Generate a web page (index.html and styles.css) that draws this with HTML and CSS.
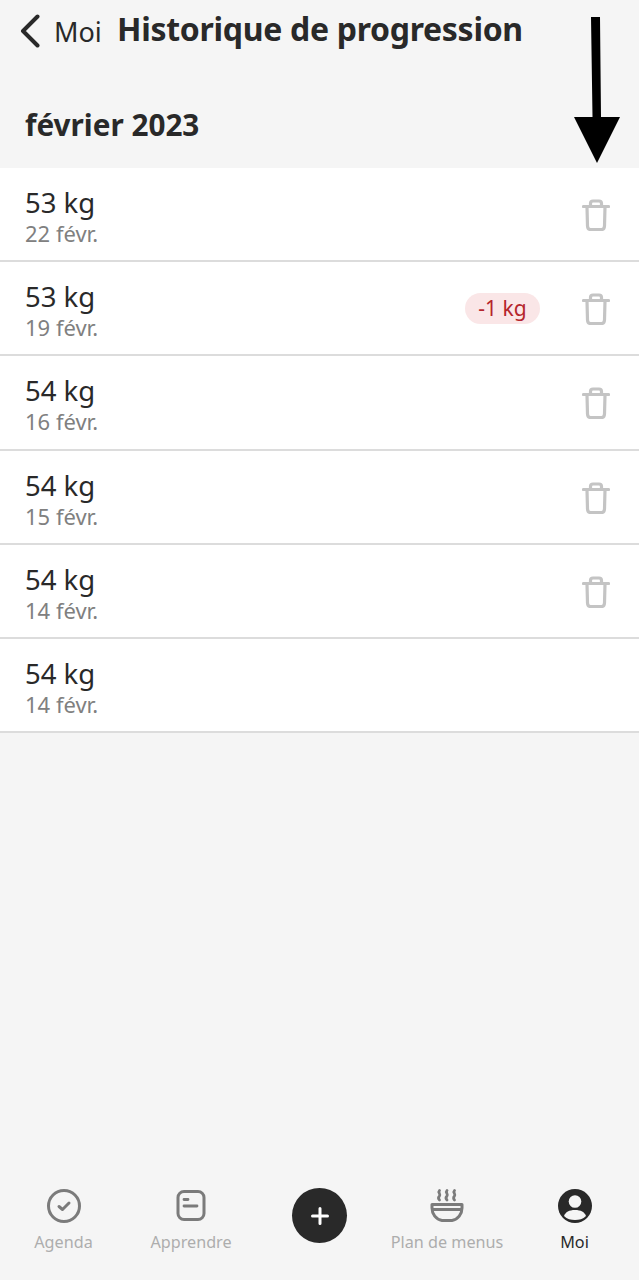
FILE: index.html
```html
<!DOCTYPE html>
<html lang="fr">
<head>
<meta charset="utf-8">
<title>Historique de progression</title>
<link rel="stylesheet" href="styles.css">
</head>
<body>
<svg class="defs" width="0" height="0" aria-hidden="true">
  <symbol id="trash" viewBox="0 0 28 32">
    <path d="M1.500 7.500H26.500M8.500 7V4.500C8.500 2.800 9.500 2 11 2H17C18.500 2 19.500 2.800 19.500 4.500V7M5 8L5.500 27C5.600 29 6.800 30.500 8.500 30.500H19.500C21.200 30.500 22.400 29 22.500 27L23 8" fill="none" stroke="currentColor" stroke-width="3.200" stroke-linecap="round" stroke-linejoin="round"/>
  </symbol>
</svg>
<div class="app">
  <header class="topbar">
    <svg class="back" viewBox="0 0 22 34" aria-hidden="true"><path d="M17.500 2.500L3 17L17.500 31.500" fill="none" stroke="currentColor" stroke-width="4" stroke-linecap="round" stroke-linejoin="round"/></svg>
    <span class="back-label">Moi</span>
    <h1 class="title">Historique de progression</h1>
  </header>
  <svg class="arrow" viewBox="0 0 46 146" aria-hidden="true"><path d="M17 0H26L27 100H46L23 146L0 100H18.500Z" fill="#000"/></svg>
  <h2 class="month">février 2023</h2>
  <ul class="list">
    <li class="row">
      <div class="info"><div class="weight">53 kg</div><div class="date">22 févr.</div></div>
      <svg class="trash"><use href="#trash"/></svg>
    </li>
    <li class="row">
      <div class="info"><div class="weight">53 kg</div><div class="date">19 févr.</div></div>
      <span class="badge">-1 kg</span>
      <svg class="trash"><use href="#trash"/></svg>
    </li>
    <li class="row">
      <div class="info"><div class="weight">54 kg</div><div class="date">16 févr.</div></div>
      <svg class="trash"><use href="#trash"/></svg>
    </li>
    <li class="row">
      <div class="info"><div class="weight">54 kg</div><div class="date">15 févr.</div></div>
      <svg class="trash"><use href="#trash"/></svg>
    </li>
    <li class="row">
      <div class="info"><div class="weight">54 kg</div><div class="date">14 févr.</div></div>
      <svg class="trash"><use href="#trash"/></svg>
    </li>
    <li class="row">
      <div class="info"><div class="weight">54 kg</div><div class="date">14 févr.</div></div>
    </li>
  </ul>
  <nav class="tabbar">
    <div class="tab tab-agenda">
      <svg class="tab-icon" viewBox="0 0 36 36" aria-hidden="true"><circle cx="18" cy="18" r="15.500" fill="none" stroke="currentColor" stroke-width="3"/><path d="M13 18.500L16.500 21.500L23 15" fill="none" stroke="currentColor" stroke-width="3" stroke-linecap="round" stroke-linejoin="round"/></svg>
      <span class="tab-label">Agenda</span>
    </div>
    <div class="tab tab-learn">
      <svg class="tab-icon" viewBox="0 0 36 36" aria-hidden="true"><rect x="5" y="3.500" width="26" height="28" rx="6" fill="none" stroke="currentColor" stroke-width="3"/><path d="M11 11.500H15M11 18H24" fill="none" stroke="currentColor" stroke-width="2.800" stroke-linecap="round"/></svg>
      <span class="tab-label">Apprendre</span>
    </div>
    <div class="tab tab-add">
      <div class="add-button"><svg class="plus" viewBox="0 0 18 18" aria-hidden="true"><path d="M9 1.500V16.500M1.500 9H16.500" fill="none" stroke="#fff" stroke-width="3" stroke-linecap="round"/></svg></div>
    </div>
    <div class="tab tab-menu">
      <svg class="tab-icon" viewBox="0 0 36 36" aria-hidden="true"><path d="M3 16.500H33V20C33 26 29 31.500 23 32.500H13C7 31.500 3 26 3 20Z" fill="none" stroke="currentColor" stroke-width="3" stroke-linejoin="round"/><path d="M3 21.500H33" stroke="currentColor" stroke-width="3"/><path d="M10.500 2.500C8.500 4.500 12 6 10.500 8C9 9.500 9.500 11 10.500 12M18 2.500C16 4.500 19.500 6 18 8C16.500 9.500 17 11 18 12M25.500 2.500C23.500 4.500 27 6 25.500 8C24 9.500 24.500 11 25.500 12" fill="none" stroke="currentColor" stroke-width="2.800" stroke-linecap="round"/></svg>
      <span class="tab-label">Plan de menus</span>
    </div>
    <div class="tab tab-me">
      <svg class="tab-icon" viewBox="0 0 36 36" aria-hidden="true"><circle cx="18" cy="18" r="17" fill="#292929"/><circle cx="18" cy="13.500" r="6.300" fill="#f5f5f5"/><path d="M7 28C8.500 24 12 22 18 22C24 22 27.500 24 29 28C26 31 22 32 18 32C14 32 10 31 7 28Z" fill="#f5f5f5"/></svg>
      <span class="tab-label tab-label-active">Moi</span>
    </div>
  </nav>
</div>
</body>
</html>
```

FILE: styles.css
```css
* { box-sizing: border-box; }
html, body { margin: 0; padding: 0; }
body {
  background: #f5f5f5;
  color: #292929;
  font-family: "Noto Sans", "Liberation Sans", sans-serif;
}
.defs { position: absolute; }
.app {
  position: relative;
  width: 639px;
  height: 1280px;
  display: flex;
  flex-direction: column;
  overflow: hidden;
}
.topbar {
  display: flex;
  align-items: center;
  height: 62px;
  padding-left: 20px;
}
.back { width: 22px; height: 34px; color: #292929; }
.back-label { margin-left: 12px; font-size: 27px; width: 63px; }
.title { margin: 0 0 5px; font-size: 32px; font-weight: 700; letter-spacing: -.3px; white-space: nowrap; }
.arrow { position: absolute; left: 574px; top: 17px; width: 46px; height: 146px; }
.month { margin: 0; padding: 40px 0 0 25px; height: 106px; font-size: 29.700px; line-height: 46px; font-weight: 700; }
.list { margin: 0; padding: 0; list-style: none; background: #fff; }
.row {
  display: flex;
  align-items: center;
  height: 94.200px;
  padding: 0 29px 0 25px;
  border-bottom: 2px solid #dcdcdc;
}
.info { flex: 1; padding-top: 5px; }
.weight { font-size: 27.500px; line-height: 33px; color: #292929; }
.date { font-size: 22px; line-height: 28px; color: #808080; }
.trash { width: 28px; height: 32px; color: #c4c4c4; margin-top: 2px; }
.badge {
  margin-right: 42px;
  width: 75px;
  height: 31px;
  border-radius: 16px;
  background: #fae6e7;
  color: #b5252c;
  font-size: 21px;
  line-height: 30px;
  text-align: center;
}
.tabbar {
  margin-top: auto;
  height: 110px;
  display: grid;
  grid-template-columns: 127px 128px 129px 126px 129px;
  padding-top: 18px;
}
.tab { display: flex; flex-direction: column; align-items: center; }
.tab-icon { width: 36px; height: 36px; color: #7b7b7b; flex: none; }
.tab-label { margin-top: 6px; font-size: 16.200px; line-height: 24px; color: #adadad; white-space: nowrap; }
.tab-label-active { color: #292929; }
.add-button {
  width: 55px;
  height: 55px;
  border-radius: 50%;
  background: #292929;
  display: flex;
  align-items: center;
  justify-content: center;
}
.plus { width: 18px; height: 18px; }
```
